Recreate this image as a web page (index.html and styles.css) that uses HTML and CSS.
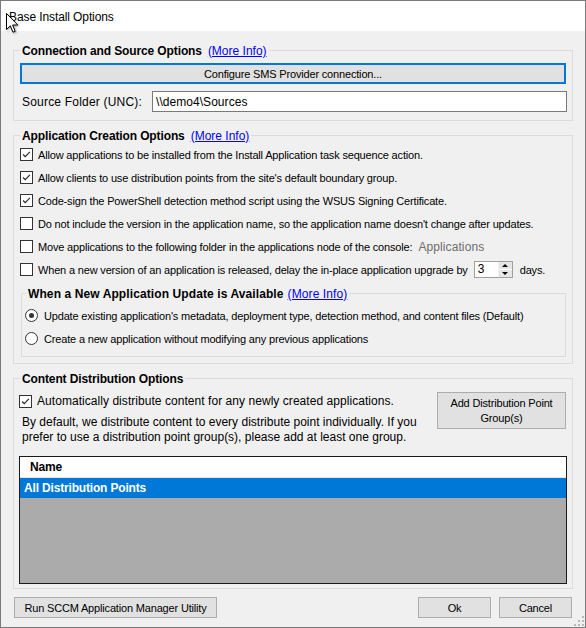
FILE: index.html
```html
<!DOCTYPE html>
<html>
<head>
<meta charset="utf-8">
<title>Base Install Options</title>
<link rel="stylesheet" href="styles.css">
</head>
<body>
<div class="window">
  <div class="titlebar"><span class="title">Base Install Options</span></div>
  <div class="body">
    <section class="group g1">
      <div class="legend"><b>Connection and Source Options</b><a class="link">(More Info)</a></div>
      <button class="btn btn-default">Configure SMS Provider connection...</button>
      <div class="field-row">
        <label class="field-label">Source Folder (UNC):</label>
        <div class="textbox">\\demo4\Sources</div>
      </div>
    </section>

    <section class="group g2">
      <div class="legend"><b>Application Creation Options</b><a class="link">(More Info)</a></div>
      <div class="row"><span class="check checked"><svg viewBox="0 0 13 13"><path d="M2.5 6.5 L5 9 L10.5 3.5" /></svg></span><span>Allow applications to be installed from the Install Application task sequence action.</span></div>
      <div class="row"><span class="check checked"><svg viewBox="0 0 13 13"><path d="M2.5 6.5 L5 9 L10.5 3.5" /></svg></span><span>Allow clients to use distribution points from the site's default boundary group.</span></div>
      <div class="row"><span class="check checked"><svg viewBox="0 0 13 13"><path d="M2.5 6.5 L5 9 L10.5 3.5" /></svg></span><span>Code-sign the PowerShell detection method script using the WSUS Signing Certificate.</span></div>
      <div class="row"><span class="check"></span><span>Do not include the version in the application name, so the application name doesn't change after updates.</span></div>
      <div class="row"><span class="check"></span><span>Move applications to the following folder in the applications node of the console:</span><span class="muted">Applications</span></div>
      <div class="row"><span class="check"></span><span>When a new version of an application is released, delay the in-place application upgrade by</span>
        <span class="spinner"><span class="spin-val">3</span><span class="spin-btns"><span class="spin-up"></span><span class="spin-down"></span></span></span>
        <span class="days">days.</span></div>

      <section class="group inner">
        <div class="legend"><b>When a New Application Update is Available</b><a class="link">(More Info)</a></div>
        <div class="row radio-row"><span class="radio on"></span><span>Update existing application's metadata, deployment type, detection method, and content files (Default)</span></div>
        <div class="row radio-row"><span class="radio"></span><span>Create a new application without modifying any previous applications</span></div>
      </section>
    </section>

    <section class="group g3">
      <div class="legend"><b>Content Distribution Options</b></div>
      <div class="dist">
        <div class="dist-left">
          <div class="row dist-check"><span class="check checked"><svg viewBox="0 0 13 13"><path d="M2.5 6.5 L5 9 L10.5 3.5" /></svg></span><span>Automatically distribute content for any newly created applications.</span></div>
          <p class="note">By default, we distribute content to every distribute point individually. If you<br>prefer to use a distribution point group(s), please add at least one group.</p>
        </div>
        <button class="btn btn-add">Add Distribution Point<br>Group(s)</button>
      </div>
      <div class="listview">
        <div class="lv-header"><span>Name</span></div>
        <div class="lv-row selected">All Distribution Points</div>
      </div>
    </section>

    <div class="footer">
      <button class="btn btn-run">Run SCCM Application Manager Utility</button>
      <button class="btn btn-ok">Ok</button>
      <button class="btn btn-cancel">Cancel</button>
    </div>
  </div>

  <svg class="grip" viewBox="0 0 10 10"><rect x="8" y="0" width="2" height="2"/><rect x="4" y="4" width="2" height="2"/><rect x="8" y="4" width="2" height="2"/><rect x="0" y="8" width="2" height="2"/><rect x="4" y="8" width="2" height="2"/><rect x="8" y="8" width="2" height="2"/></svg>
  <svg class="cursor" viewBox="0 0 13 21"><path d="M0.5 0.5 L0.5 16.5 L4.3 12.8 L7 19.2 L9.2 18.3 L6.6 12 L11.8 12 Z"/></svg>
</div>
</body>
</html>
```
FILE: styles.css
```css
html, body {
  margin: 0;
  padding: 0;
  background: #ffffff;
}

.window {
  position: relative;
  width: 586px;
  height: 628px;
  box-sizing: border-box;
  border: 1px solid #7a7a7a;
  background: #f0f0f0;
  display: flex;
  flex-direction: column;
  font-family: "Liberation Sans", Arial, sans-serif;
  font-size: 11px;
  letter-spacing: -0.17px;
  color: #000;
  overflow: hidden;
}

.titlebar {
  flex: none;
  height: 30px;
  background: #fff;
  display: flex;
  align-items: center;
  padding-left: 8px;
  padding-top: 1px;
  box-sizing: border-box;
  font-size: 12px;
  letter-spacing: -0.1px;
}

.body {
  display: flex;
  flex-direction: column;
  padding: 0 12px;
}

.group {
  border: 1px solid #dcdcdc;
  padding: 0 6px;
  display: flex;
  flex-direction: column;
}

.legend {
  align-self: flex-start;
  display: flex;
  align-items: center;
  gap: 6px;
  height: 15px;
  margin-top: -8px;
  padding: 0 2px;
  background: #f0f0f0;
  font-size: 12px;
  white-space: nowrap;
}

.legend b {
  font-weight: bold;
  letter-spacing: -0.12px;
}

.link {
  color: #0000ff;
  text-decoration: underline;
  letter-spacing: 0;
}

.btn {
  font-family: inherit;
  font-size: 11px;
  letter-spacing: -0.17px;
  color: #000;
  background: #e1e1e1;
  border: 1px solid #adadad;
  padding: 0;
  margin: 0;
  box-sizing: border-box;
}

.g1 {
  margin-top: 19px;
  padding-bottom: 8px;
}

.btn-default {
  margin-top: 5px;
  height: 21px;
  border: 2px solid #0078d7;
}

.field-row {
  display: flex;
  align-items: center;
  margin-top: 7px;
}

.field-label {
  width: 132px;
  box-sizing: border-box;
  padding-left: 2px;
  font-size: 12px;
  letter-spacing: 0.2px;
}

.textbox {
  flex: 1;
  height: 21px;
  box-sizing: border-box;
  margin-right: -1px;
  background: #fff;
  border: 1px solid #7a7a7a;
  padding-left: 3px;
  display: flex;
  align-items: center;
  font-size: 12px;
  letter-spacing: 0.05px;
}

.g2 {
  margin-top: 14px;
  padding-bottom: 6px;
}

.row {
  display: flex;
  align-items: center;
  height: 23px;
  white-space: nowrap;
}

.check {
  flex: none;
  width: 13px;
  height: 13px;
  box-sizing: border-box;
  border: 1px solid #333;
  background: #fff;
  margin-right: 5px;
  display: flex;
}

.check svg {
  width: 11px;
  height: 11px;
  margin: 0;
}

.check path {
  fill: none;
  stroke: #222;
  stroke-width: 1.3;
}

.muted {
  color: #6d6d6d;
  margin-left: 6px;
  font-size: 12px;
  letter-spacing: 0.1px;
}

.spinner {
  display: flex;
  width: 39px;
  height: 17px;
  box-sizing: border-box;
  border: 1px solid #a0a0a0;
  background: #fff;
  margin-left: 6px;
}

.spin-val {
  flex: 1;
  padding-left: 3px;
  font-size: 12px;
  line-height: 15px;
}

.spin-btns {
  width: 13px;
  display: flex;
  flex-direction: column;
  border-left: 1px solid #f0f0f0;
}

.spin-up, .spin-down {
  flex: 1;
  background: #e6e6e6;
  display: flex;
  align-items: center;
  justify-content: center;
}

.spin-up {
  border-bottom: 1px solid #fff;
}

.spin-up::after {
  content: "";
  border-left: 3px solid transparent;
  border-right: 3px solid transparent;
  border-bottom: 3px solid #000;
}

.spin-down::after {
  content: "";
  border-left: 3px solid transparent;
  border-right: 3px solid transparent;
  border-top: 3px solid #000;
}

.days {
  margin-left: 7px;
}

.inner {
  margin-top: 12px;
  margin-left: 1px;
  padding: 0 3px 6px 3px;
}

.inner .legend {
  margin-left: 1px;
  gap: 4px;
}

.inner .legend b {
  letter-spacing: 0.1px;
}

.inner .legend .link {
  letter-spacing: 0.1px;
}

.inner .legend + .radio-row {
  margin-top: 3px;
}

.radio {
  flex: none;
  width: 13px;
  height: 13px;
  box-sizing: border-box;
  border: 1px solid #333;
  border-radius: 50%;
  background: #fff;
  margin-right: 6px;
  display: flex;
  align-items: center;
  justify-content: center;
}

.radio.on::after {
  content: "";
  width: 5px;
  height: 5px;
  border-radius: 50%;
  background: #333;
}

.g3 {
  margin-top: 14px;
  padding-bottom: 4px;
}

.dist {
  display: flex;
  align-items: flex-start;
}

.dist-left {
  display: flex;
  flex-direction: column;
}

.dist-check {
  margin-top: 4px;
  height: 22px;
  margin-left: -1px;
  font-size: 12px;
  letter-spacing: 0.05px;
}

.note {
  margin: 3px 0 0 2px;
  line-height: 15px;
  white-space: nowrap;
  font-size: 12px;
  letter-spacing: 0;
}

.btn-add {
  margin-left: auto;
  margin-top: 6px;
  width: 129px;
  height: 37px;
  line-height: 15px;
}

.listview {
  margin-top: 11px;
  margin-left: -1px;
  width: 548px;
  height: 128px;
  box-sizing: border-box;
  border: 1px solid #1a1a1a;
  background: #ababab;
  display: flex;
  flex-direction: column;
}

.lv-header {
  height: 20px;
  background: #fff;
  display: flex;
  align-items: center;
  padding-left: 10px;
  font-weight: bold;
  font-size: 12px;
  border-bottom: 1px solid #e5e5e5;
}

.lv-row {
  height: 20px;
  display: flex;
  align-items: center;
  padding-left: 4px;
}

.lv-row.selected {
  background: #0078d7;
  color: #fff;
  font-weight: bold;
  font-size: 12px;
}

.footer {
  display: flex;
  margin-top: 8px;
  padding: 0 1px;
}

.btn-run {
  width: 203px;
  height: 21px;
}

.btn-ok {
  margin-left: auto;
  width: 73px;
  height: 21px;
}

.btn-cancel {
  margin-left: 8px;
  width: 73px;
  height: 21px;
}

.grip {
  position: absolute;
  right: 1px;
  bottom: 1px;
  width: 10px;
  height: 10px;
  fill: #b8b8b8;
}

.cursor {
  position: absolute;
  left: 5px;
  top: 12px;
  width: 13px;
  height: 21px;
  filter: drop-shadow(1px 1px 1px rgba(0,0,0,0.35));
}

.cursor path {
  fill: #fff;
  stroke: #000;
  stroke-width: 1;
  stroke-linejoin: miter;
}
```
